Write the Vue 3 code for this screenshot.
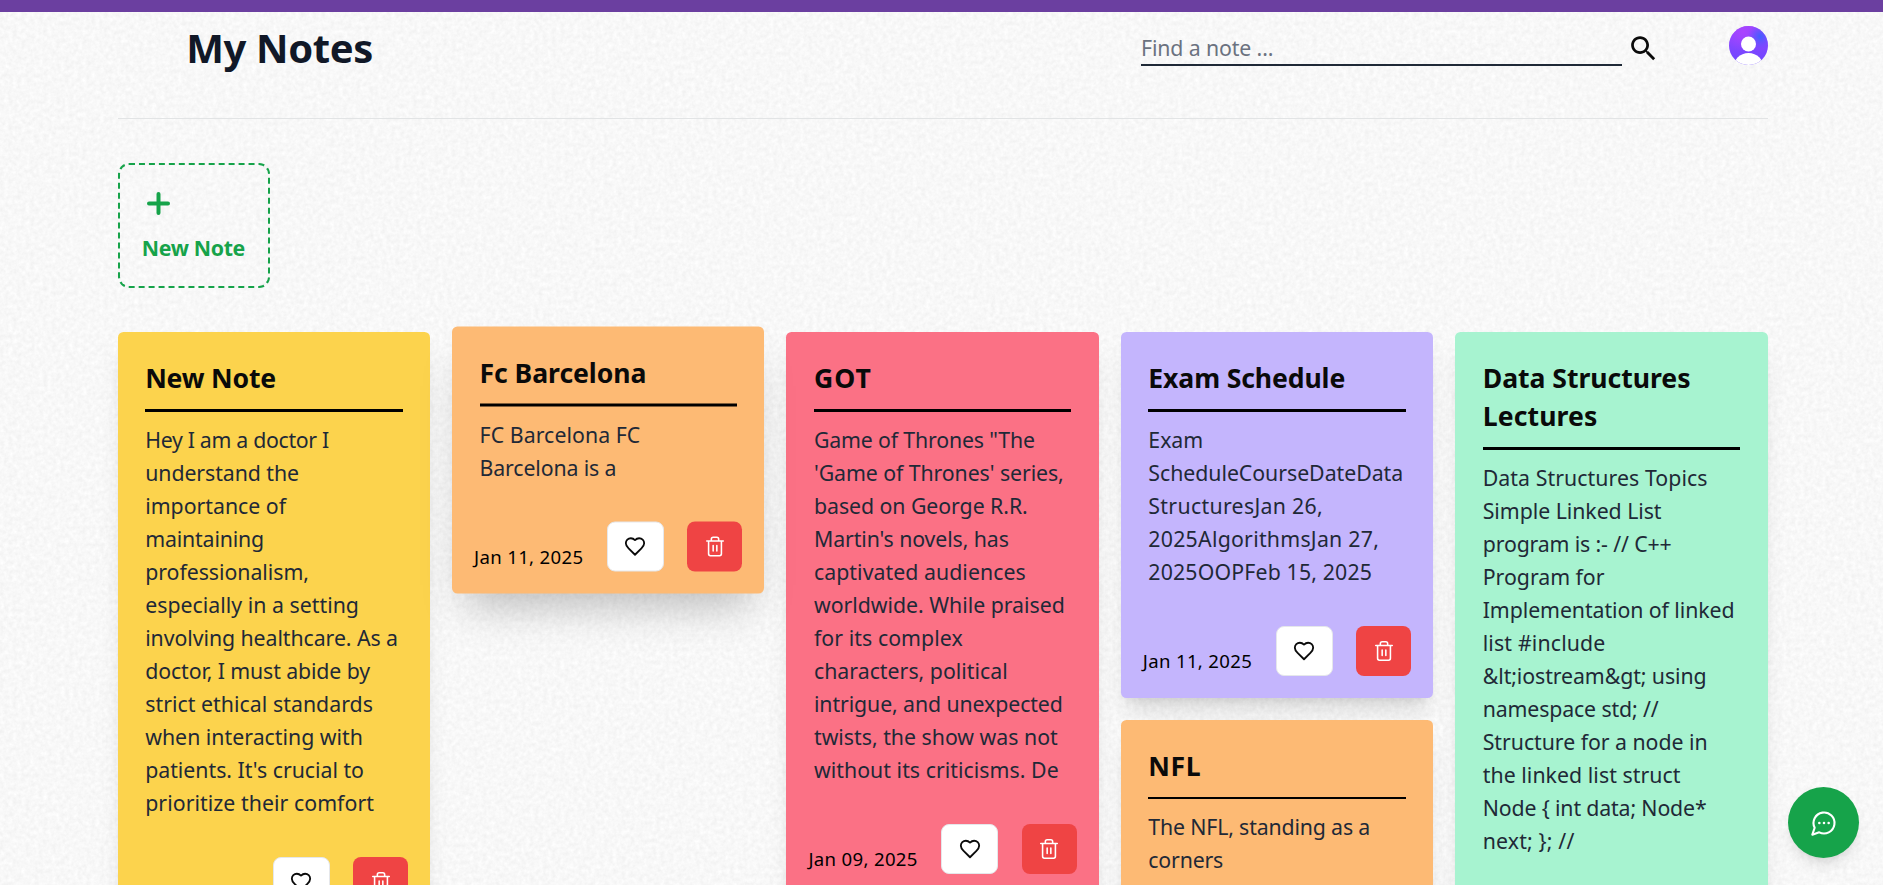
<script setup>
import { nextTick } from 'vue'

// Spreads a line's letters so that its advance equals the given width.
const vFit = {
  mounted(el, { value }) {
    nextTick(() => {
      const natural = el.getBoundingClientRect().width
      const count = [...el.textContent].length
      el.style.letterSpacing = `${(value - 1.2 - natural) / count}px`
    })
  },
}

const columns = [
  [
    {
      tone: 'yellow',
      title: [['New Note', 132]],
      body: [
        ['Hey I am a doctor I', 185],
        ['understand the', 155],
        ['importance of', 142],
        ['maintaining', 120],
        ['professionalism,', 165],
        ['especially in a setting', 215],
        ['involving healthcare. As a', 254],
        ['doctor, I must abide by', 226],
        ['strict ethical standards', 229],
        ['when interacting with', 219],
        ["patients. It's crucial to", 220],
        ['prioritize their comfort', 230],
      ],
      date: 'Jan 11, 2025',
    },
  ],
  [
    {
      tone: 'orange',
      raised: true,
      title: [['Fc Barcelona', 168]],
      body: [
        ['FC Barcelona FC', 162],
        ['Barcelona is a', 138],
      ],
      date: 'Jan 11, 2025',
    },
  ],
  [
    {
      tone: 'pink',
      title: [['GOT', 59]],
      body: [
        ['Game of Thrones "The', 222],
        ["'Game of Thrones' series,", 251],
        ['based on George R.R.', 215],
        ["Martin's novels, has", 196],
        ['captivated audiences', 213],
        ['worldwide. While praised', 252],
        ['for its complex', 150],
        ['characters, political', 195],
        ['intrigue, and unexpected', 250],
        ['twists, the show was not', 245],
        ['without its criticisms. De', 246],
      ],
      date: 'Jan 09, 2025',
    },
  ],
  [
    {
      tone: 'violet',
      title: [['Exam Schedule', 198]],
      body: [
        ['Exam', 56],
        ['ScheduleCourseDateData', 256],
        ['StructuresJan 26,', 176],
        ['2025AlgorithmsJan 27,', 232],
        ['2025OOPFeb 15, 2025', 225],
      ],
      date: 'Jan 11, 2025',
    },
    {
      tone: 'orange',
      title: [['NFL', 54]],
      body: [
        ['The NFL, standing as a', 223],
        ['corners', 76],
      ],
      date: 'Jan 11, 2025',
    },
  ],
  [
    {
      tone: 'green',
      title: [
        ['Data Structures', 209],
        ['Lectures', 116],
      ],
      body: [
        ['Data Structures Topics', 226],
        ['Simple Linked List', 180],
        ['program is :- // C++', 190],
        ['Program for', 123],
        ['Implementation of linked', 253],
        ['list #include', 124],
        ['&lt;iostream&gt; using', 225],
        ['namespace std; //', 177],
        ['Structure for a node in', 226],
        ['the linked list struct', 199],
        ['Node { int data; Node*', 225],
        ['next; }; //', 93],
      ],
      date: 'Jan 11, 2025',
    },
  ],
]
</script>

<template>
  <div class="page">
    <svg class="paper" aria-hidden="true">
      <filter id="grain" x="0" y="0" width="100%" height="100%" color-interpolation-filters="sRGB">
        <feTurbulence type="fractalNoise" baseFrequency="0.23" numOctaves="3" seed="4" />
        <feColorMatrix
          values="0.07 0.01 0 0 0.932  0.07 0.01 0 0 0.932  0.07 0.01 0 0 0.932  0 0 0 0 1"
        />
      </filter>
      <rect width="100%" height="100%" filter="url(#grain)" />
    </svg>
    <div class="topbar"></div>

    <div class="content">
      <header class="header">
        <h1><span v-fit="188">My Notes</span></h1>
        <div class="tools">
          <div class="search"><span v-fit="133.5">Find a note ...</span></div>
          <svg class="search-icon" viewBox="0 0 24 24">
            <path
              fill="#0a0a0a"
              d="M15.5 14h-.79l-.28-.27C15.41 12.59 16 11.11 16 9.5 16 5.91 13.09 3 9.5 3S3 5.91 3 9.5 5.91 16 9.5 16c1.61 0 3.09-.59 4.23-1.57l.27.28v.79l5 4.99L20.49 19l-4.99-5zm-6 0C7.01 14 5 11.99 5 9.5S7.01 5 9.5 5 14 7.01 14 9.5 11.99 14 9.5 14z"
            />
          </svg>
          <svg class="avatar" viewBox="0 0 39 39">
            <defs>
              <linearGradient id="base" x1="0" y1="0" x2="0" y2="1">
                <stop offset="0" stop-color="#9a45ff" />
                <stop offset="1" stop-color="#6c47ff" />
              </linearGradient>
              <radialGradient id="blue" cx=".8" cy=".27" r=".32">
                <stop offset="0" stop-color="#4060ff" />
                <stop offset="1" stop-color="#5a55ff" stop-opacity="0" />
              </radialGradient>
              <radialGradient id="pink" cx=".36" cy=".15" r=".5">
                <stop offset="0" stop-color="#ab45ff" />
                <stop offset="1" stop-color="#a445ff" stop-opacity="0" />
              </radialGradient>
              <clipPath id="round"><circle cx="19.5" cy="19.5" r="19.5" /></clipPath>
            </defs>
            <g clip-path="url(#round)">
              <rect width="39" height="39" fill="url(#base)" />
              <rect width="39" height="39" fill="url(#pink)" />
              <rect width="39" height="39" fill="url(#blue)" />
              <circle cx="19.5" cy="18" r="7.5" fill="#fff" />
              <circle cx="19.5" cy="42.5" r="15.5" fill="#fff" />
            </g>
          </svg>
        </div>
      </header>

      <button class="new-note" type="button">
        <svg viewBox="0 0 33 33">
          <path d="M16.5 7v19M7 16.5h19" stroke="#16a34a" stroke-width="4" stroke-linecap="round" />
        </svg>
        <span v-fit="104.5">New Note</span>
      </button>

      <main class="board">
        <div v-for="(column, c) in columns" :key="c" class="column">
          <article
            v-for="note in column"
            :key="note.title[0][0]"
            class="note"
            :class="[note.tone, { raised: note.raised }]"
          >
            <h2>
              <span v-for="[text, width] in note.title" :key="text" class="line">
                <span v-fit="width">{{ text }}</span>
              </span>
            </h2>
            <div class="rule"></div>
            <p>
              <span v-for="[text, width] in note.body" :key="text" class="line">
                <span v-fit="width">{{ text }}</span>
              </span>
            </p>
            <footer>
              <time><span v-fit="110.5">{{ note.date }}</span></time>
              <button class="like" type="button">
                <svg viewBox="0 0 24 24">
                  <path
                    d="M19 14c1.49-1.46 3-3.21 3-5.5A5.5 5.5 0 0 0 16.5 3c-1.76 0-3 .5-4.5 2-1.5-1.5-2.74-2-4.5-2A5.5 5.5 0 0 0 2 8.5c0 2.3 1.5 4.05 3 5.5l7 7Z"
                  />
                </svg>
              </button>
              <button class="remove" type="button">
                <svg viewBox="0 0 24 24">
                  <path
                    d="M3 6h18M19 6v14c0 1-1 2-2 2H7c-1 0-2-1-2-2V6M8 6V4c0-1 1-2 2-2h4c1 0 2 1 2 2v2M10 11v6M14 11v6"
                  />
                </svg>
              </button>
            </footer>
          </article>
        </div>
      </main>
    </div>

    <button class="chat" type="button">
      <svg viewBox="0 0 24 24">
        <path d="M7.9 20A9 9 0 1 0 4 16.1L2 22Z" />
        <path d="M8 12h.01M12 12h.01M16 12h.01" stroke-width="2.2" />
      </svg>
    </button>
  </div>
</template>

<style>
body {
  overflow: hidden;
}
</style>

<style scoped>
* {
  box-sizing: border-box;
}
.page {
  position: relative;
  height: 885px;
  overflow: hidden;
  background: #f7f7f7;
  font-family: 'Noto Sans', sans-serif;
  font-size: 21.3px;
  line-height: 33px;
  color: #0a0a0a;
}
.paper {
  position: absolute;
  inset: 0;
  width: 100%;
  height: 100%;
}
.topbar {
  position: relative;
  height: 12px;
  background: #6b3fa0;
}
.content {
  position: relative;
  padding: 0 115.4px 0 117.7px;
}
h1,
h2,
p {
  margin: 0;
}
button {
  margin: 0;
  padding: 0;
  border: 0;
  font: inherit;
}
svg {
  display: block;
}
span {
  white-space: pre;
}
.line {
  display: block;
}
.header {
  display: flex;
  justify-content: space-between;
  align-items: flex-start;
  height: 107px;
  border-bottom: 1px solid #e2e4e5;
}
h1 {
  margin: 9px 0 0 68.5px;
  font-size: 40px;
  line-height: 54px;
  font-weight: 700;
  color: #111827;
}
.tools {
  display: flex;
  align-items: flex-start;
  margin-right: -0.4px;
}
.search {
  width: 481px;
  height: 35px;
  margin-top: 19px;
  border-bottom: 2px solid #1f2937;
  color: #6b7280;
}
.search-icon {
  width: 33px;
  height: 33px;
  margin: 20px 69px 0 5px;
}
.avatar {
  width: 39px;
  height: 39px;
  margin-top: 14px;
}
.new-note {
  display: flex;
  flex-direction: column;
  align-items: flex-start;
  width: 152px;
  height: 125px;
  margin-top: 44px;
  padding: 22px 0 0 22px;
  border: 2px dashed #16a34a;
  border-radius: 11px;
  background: transparent;
  color: #16a34a;
  font-weight: 700;
}
.new-note svg {
  width: 33px;
  height: 33px;
  margin-bottom: 11px;
}
.board {
  display: grid;
  grid-template-columns: repeat(5, 1fr);
  gap: 22px;
  align-items: start;
  margin-top: 43.9px;
}
.column {
  display: flex;
  flex-direction: column;
  gap: 22px;
}
.note {
  padding: 27.5px 27.5px 22px;
  border-radius: 5.5px;
  box-shadow:
    0 20px 25px -5px rgba(0, 0, 0, 0.1),
    0 8px 10px -6px rgba(0, 0, 0, 0.1);
}
.raised {
  transform: translateY(-5.5px);
  box-shadow: 0 25px 40px -14px rgba(0, 0, 0, 0.25);
}
.yellow {
  background: #fcd34d;
}
.orange {
  background: #fdba74;
}
.pink {
  background: #fb7185;
}
.violet {
  background: #c4b5fd;
}
.green {
  background: #a7f3d0;
}
h2 {
  margin: -0.5px 0 11.5px;
  font-size: 26.6px;
  line-height: 38.5px;
  font-weight: 700;
}
.rule {
  height: 2.75px;
  margin-bottom: 11px;
  background: #000;
}
p {
  color: #1f2937;
}
footer {
  display: flex;
  justify-content: space-between;
  align-items: flex-end;
  margin: 38px -5.5px 0;
}
time {
  margin-bottom: 1px;
  font-size: 18.6px;
  line-height: 27.5px;
  color: #000;
}
.like,
.remove {
  display: grid;
  place-items: center;
  height: 50px;
  border-radius: 8px;
}
.like {
  width: 57px;
  background: #fff;
  border: 1px solid #e5e7eb;
}
.remove {
  width: 55px;
  background: #ef4444;
}
.like svg,
.remove svg {
  width: 22px;
  height: 22px;
  fill: none;
  stroke: #0a0a0a;
  stroke-width: 2;
  stroke-linecap: round;
  stroke-linejoin: round;
}
.remove svg {
  stroke: #fff;
  stroke-width: 1.7;
}
.chat {
  position: absolute;
  right: 24px;
  bottom: 27px;
  display: grid;
  place-items: center;
  width: 71px;
  height: 71px;
  border-radius: 50%;
  background: #16a34a;
  box-shadow:
    0 10px 15px -3px rgba(0, 0, 0, 0.1),
    0 4px 6px -4px rgba(0, 0, 0, 0.1);
}
.chat svg {
  width: 28px;
  height: 28px;
  fill: none;
  stroke: #fff;
  stroke-width: 1.8;
  stroke-linecap: round;
  stroke-linejoin: round;
}
</style>
